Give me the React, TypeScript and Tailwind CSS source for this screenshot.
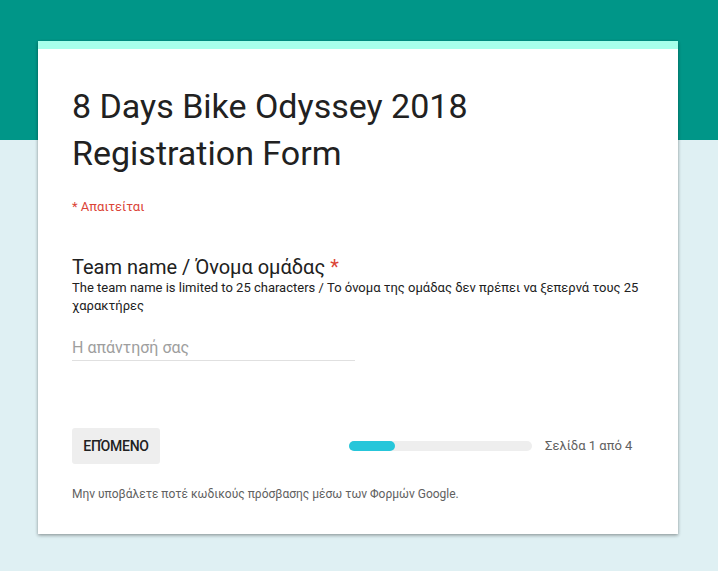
import React from 'react';

const App: React.FC = () => {
  return (
    <div
      className="min-h-screen bg-[linear-gradient(to_bottom,#009688_140px,#dff0f3_140px)] pt-[41px] pb-10"
      style={{ fontFamily: 'Roboto, "Noto Sans", sans-serif' }}
    >
      <div className="ml-[38px] w-[640px] bg-white shadow-[0_1px_3px_rgba(0,0,0,0.3),0_2px_4px_rgba(0,0,0,0.12)]">
        <div className="h-[8px] bg-[#a7ffeb]" />
        <div className="px-[34px] pt-[34px] pb-[32px]">
          <h1 className="text-[34px] leading-[47px] text-[#212121]">
            8 Days Bike Odyssey 2018
            <br />
            Registration Form
          </h1>
          <p className="mt-[22px] text-[13px] leading-[16px] text-[#db4437]">* Απαιτείται</p>

          <div className="mt-[40px]">
            <h2 className="text-[20px] leading-[24px] text-[#212121]">
              Team name / Όνομα ομάδας <span className="text-[#db4437]">*</span>
            </h2>
            <p className="text-[13px] leading-[18px] text-[#212121]">
              The team name is limited to 25 characters / Το όνομα της ομάδας δεν πρέπει να ξεπερνά τους 25
              χαρακτήρες
            </p>
            <div className="mt-[23px] w-[283px] border-b border-[#e0e0e0] pb-[2px] text-[16px] leading-[20px] text-[#9e9e9e]">
              Η απάντησή σας
            </div>
          </div>

          <div className="mt-[67px] flex items-center">
            <button className="h-[36px] w-[88px] rounded-[3px] bg-[#eeeeee] text-[14px] font-medium tracking-[-0.3px] text-[#212121]">
              ΕΠΌΜΕΝΟ
            </button>
            <div className="ml-[189px] h-[10px] w-[183px] rounded-full bg-[#eeeeee]">
              <div className="h-full w-[46px] rounded-full bg-[#26c6da]" />
            </div>
            <span className="ml-[13px] text-[13px] text-[#616161]">Σελίδα 1 από 4</span>
          </div>

          <p className="mt-[22px] text-[12px] leading-[16px] text-[#616161]">
            Μην υποβάλετε ποτέ κωδικούς πρόσβασης μέσω των Φορμών Google.
          </p>
        </div>
      </div>
    </div>
  );
};

export default App;
